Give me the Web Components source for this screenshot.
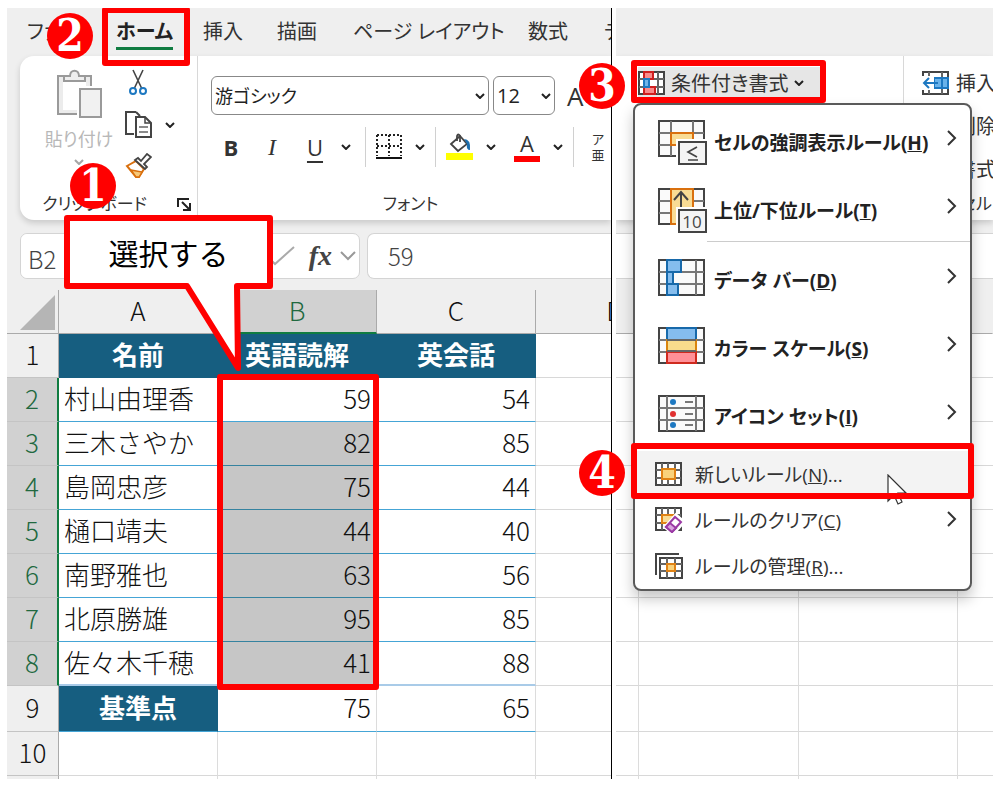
<!DOCTYPE html>
<html lang="ja">
<head>
<meta charset="UTF-8">
<title>条件付き書式</title>
<style>
    body {
        margin: 8px 15px 7px 7px;
        background: white;
        color: #333;
        font-family: "Open Sans", "Noto Sans CJK JP", sans-serif;
        overflow: hidden;
    }
</style>
</head>
<body>
<split-view>
    <excel-pane class="main">
        <ribbon-tabs>
            <ribbon-tab>ファイル</ribbon-tab>
            <ribbon-tab active>ホーム</ribbon-tab>
            <ribbon-tab>挿入</ribbon-tab>
            <ribbon-tab>描画</ribbon-tab>
            <ribbon-tab>ページ レイアウト</ribbon-tab>
            <ribbon-tab>数式</ribbon-tab>
            <ribbon-tab>データ</ribbon-tab>
        </ribbon-tabs>
        <ribbon-bar rounded>
            <clipboard-group></clipboard-group>
            <font-group></font-group>
        </ribbon-bar>
        <formula-bar cell="B2" value="59"></formula-bar>
        <score-sheet></score-sheet>
        <red-frame slot="overlay" style="left: 95px; top: -1px; width: 88px; height: 59px"></red-frame>
        <red-frame slot="overlay" style="left: 210px; top: 366px; width: 162px; height: 316px"></red-frame>
        <call-out slot="overlay" style="left: 57px; top: 207px">選択する</call-out>
        <step-badge slot="overlay" style="left: 40px; top: 5px">2</step-badge>
        <step-badge slot="overlay" style="left: 63px; top: 155px">1</step-badge>
    </excel-pane>
    <excel-pane class="side">
        <ribbon-tabs></ribbon-tabs>
        <ribbon-bar>
            <style-group></style-group>
            <cells-group></cells-group>
        </ribbon-bar>
        <formula-bar blank></formula-bar>
        <blank-sheet></blank-sheet>
        <rule-menu slot="overlay" style="left: 17px; top: 95px">
            <rule-item big icon="highlight" key="H" more>セルの強調表示ルール</rule-item>
            <rule-item big icon="topten" key="T" more divided>上位/下位ルール</rule-item>
            <rule-item big icon="databar" key="D" more>データ バー</rule-item>
            <rule-item big icon="scale" key="S" more>カラー スケール</rule-item>
            <rule-item big icon="iconset" key="I" more>アイコン セット</rule-item>
            <rule-item icon="newrule" key="N" tail="..." hover>新しいルール</rule-item>
            <rule-item icon="clear" key="C" more>ルールのクリア</rule-item>
            <rule-item icon="manage" key="R" tail="...">ルールの管理</rule-item>
        </rule-menu>
        <app-icon slot="overlay" name="pointer" style="left: 271px; top: 466px"></app-icon>
        <red-frame slot="overlay" style="left: 15px; top: 52px; width: 195px; height: 43px"></red-frame>
        <red-frame slot="overlay" style="left: 15px; top: 435px; width: 343px; height: 56px"></red-frame>
        <step-badge slot="overlay" style="left: -37px; top: 55px">3</step-badge>
        <step-badge slot="overlay" style="left: -37px; top: 442px">4</step-badge>
    </excel-pane>
</split-view>

<script>
const svg = (w, h, body) => `<svg width="${w}" height="${h}" viewBox="0 0 ${w} ${h}" fill="none" stroke="#444" stroke-width="2">${body}</svg>`;

// grids shared by the large and the small icons
const bigGrid = '<path d="M2 2H47V37H2Z" fill="#fafafa"/><path stroke="#777" d="M2 14H47M2 26H47M10 2V37M39 2V37"/>';
const wideGrid = '<path d="M2 2H47V37H2Z" fill="#fafafa"/><path stroke="#777" d="M2 14H47M2 26H47M14 2V37M36 2V37"/>';
const smallGrid = '<path d="M1 1H26V23H1Z" fill="#fff"/><path stroke="#666" d="M1 8H26M1 16H26M7 1V23M20 1V23"/>';
const cornerBox = '<path fill="#f4f4f4" stroke="#fff" stroke-width="6" d="M22 23H50V45H22Z"/><path fill="#f4f4f4" d="M22 23H49V45H22Z"/>';

const ICONS = {
    chevron: svg(10, 6, '<path stroke="#222" d="M1 1L5 5L9 1"/>'),
    paste: svg(46, 50, '<g stroke="#9a9a9a"><path fill="#ececec" d="M2 7H35V45H2Z"/><path fill="#fff" stroke="none" d="M7 12H30V41H7Z"/><path fill="#eee" d="M8 12V7H14C14 0 23 0 23 7H29V12Z"/><path fill="#f1f1f1" stroke="#fff" stroke-width="6" d="M24 20H45V49H24Z"/><path fill="#f1f1f1" d="M24 20H45V48H24Z"/></g>'),
    cut: svg(18, 27, '<path stroke-width="1.6" d="M4 1L13 20M14 1L5 20"/><g stroke="#1d78c1"><circle cx="4" cy="22" r="3"/><circle cx="14" cy="22" r="3"/></g>'),
    copy: svg(28, 27, '<path d="M11 1H1V23H9M11 1L15 5"/><path fill="#fff" d="M11 6H20L26 12V26H11Z"/><path d="M20 6V12H26" stroke-width="1.5"/><path stroke="#666" stroke-width="1.5" d="M14 16H23M14 21H23"/>'),
    painter: svg(27, 26, '<path fill="#fff" stroke="#d9700e" d="M2 13L11 8L19 16L14 24L11 24Z"/><path fill="#f7c979" stroke="#d9700e" stroke-width="1.4" d="M6 17L17 19L14 24H11Z"/><path fill="#fff" stroke-width="1.8" d="M10 7L13 5L16 8L22 1L26 4L19 11L22 14L20 16Z"/>'),
    launcher: svg(14, 13, '<path stroke="#222" d="M1 9V1H12M5 4L12 11M13 5V12H6"/>'),
    borders: svg(26, 26, '<g stroke="#222" stroke-dasharray="2 2"><path d="M1 1H25M1 1V22M25 1V22M13 1V22M1 12H25"/></g><path stroke="#111" d="M0 24H26"/>'),
    fill: svg(27, 28, '<path d="M0 20H27V27H0Z" fill="#ff0" stroke="none"/><path fill="#fff" stroke-width="1.8" d="M5 11L14 3L21 11L12 18Z"/><path stroke-width="1.8" d="M11 8V3Q12 0 14 3V9"/><path fill="#1d6fae" stroke="none" d="M18 6Q25 6 24 17Q20 17 21 11Z"/>'),
    check: svg(28, 20, '<path stroke="#aaa" d="M1 11L8 18L27 1"/>'),
    down: svg(16, 10, '<path stroke="#999" d="M1 1L8 8L15 1"/>'),
    right: svg(10, 18, '<path stroke="#333" d="M1 2L8 9L1 16"/>'),
    format: svg(27, 24, smallGrid + '<path fill="#f98b8b" stroke="#cf1f1f" d="M6 1H15V8H6ZM6 16H17V23H6Z"/><path fill="#6fb4ea" stroke="#1d78c1" d="M6 8H11V16H6Z"/>'),
    insert: svg(27, 24, smallGrid + '<path fill="#69b2ea" stroke="#1d78c1" d="M12 7H26V17H12Z"/><path d="M0 5H12V19H0Z" fill="#fff" stroke="none"/><path stroke="#1d78c1" d="M2 12H16M7 7L2 12L7 17M20 7V17"/>'),
    highlight: svg(50, 46, wideGrid + '<path fill="#fafafa" stroke="none" d="M15 3H35V13H15Z"/><path fill="#f9dc94" stroke="#d9700e" d="M14 14H36V26H14Z"/>' + cornerBox + '<path stroke-width="1.7" d="M40 28L31 33L40 38M31 41H41"/>'),
    topten: svg(50, 46, wideGrid + '<path fill="#f9dc94" stroke="#d9700e" d="M14 2H36V37H14Z"/><path d="M24 5V24M17 13L24 5L31 13"/>' + cornerBox + '<text x="35" y="41" text-anchor="middle" font-family="Open Sans, sans-serif" font-size="17" font-weight="400" fill="#444" stroke="none">10</text>'),
    databar: svg(50, 44, bigGrid + '<g fill="#85bdee" stroke="#1769aa"><path d="M10 2H24V14H10ZM10 14H16V26H10ZM10 26H21V37H10Z"/></g>'),
    scale: svg(50, 44, bigGrid + '<path fill="#85bdee" stroke="#1769aa" d="M10 2H39V14H10Z"/><path fill="#f9dc8c" stroke="#d9850e" d="M10 14H39V26H10Z"/><path fill="#ff9097" stroke="#cf2a1f" d="M10 26H39V37H10Z"/><path stroke="#666" d="M10 14H39M10 25H39"/>'),
    iconset: svg(50, 44, bigGrid + '<g stroke="none"><circle cx="16" cy="8" r="3" fill="#1d78c1"/><circle cx="16" cy="20" r="3" fill="#e03030"/><circle cx="16" cy="31" r="3" fill="#1d78c1"/></g><path stroke="#777" d="M28 8H36M28 20H36M28 31H36"/>'),
    newrule: svg(27, 24, smallGrid + '<path stroke="#666" d="M13 1V23"/><path fill="#f9d27b" stroke="#e08214" d="M7 7H20V17H7Z"/>'),
    clear: svg(28, 26, smallGrid + '<path stroke="#666" d="M13 1V23"/><path fill="#f9dc94" stroke="#e08214" d="M7 8H20V16H7Z"/><path fill="#fff" stroke="#fff" stroke-width="6" d="M12 20L21 10L27 15L18 25Z"/><path fill="#fff" stroke="#9b3aa5" d="M11 20L20 10L26 15L17 25Z"/><path fill="#d9a6df" stroke="#9b3aa5" d="M11 20L15 16L21 21L17 25Z"/>'),
    manage: svg(28, 27, '<path d="M1 22V1H24"/><path fill="#fff" d="M5 5H27V25H5Z"/><path stroke="#666" d="M5 11H27M5 18H27M12 5V25M20 5V25"/><path fill="#f9d27b" stroke="#e08214" d="M12 11H20V18H12Z"/>'),
    pointer: svg(22, 32, '<path fill="#fff" stroke="#333" stroke-width="1.2" d="M1 1V27L7 21L11 30L15 28L11 19H19Z"/>')
};

function define(name, render) {
    customElements.define(name, class extends HTMLElement {
        constructor() {
            super();
            this.attachShadow({ mode: 'open' });
        }

        connectedCallback() {
            this.shadowRoot.innerHTML = render(this);
        }
    });
}

define('app-icon', (el) => `
    <style>
        :host { display: block; flex: none; }
        :host([slot="overlay"]) { position: absolute; }
        svg { display: block; }
    </style>
    ${ICONS[el.getAttribute('name')]}
`);

define('split-view', () => `
    <style>
        :host {
            display: grid;
            grid-template-columns: 605fr 377fr;
            gap: 4px;
        }
    </style>
    <slot></slot>
`);

define('excel-pane', () => `
    <style>
        :host { display: block; position: relative; min-width: 0; }
        :host(.main) .content { border-right: 1px solid black; }
        .content {
            overflow: hidden;
            background: #efefef;
        }
    </style>
    <div class="content"><slot></slot></div>
    <slot name="overlay"></slot>
`);

define('ribbon-tabs', () => `
    <style>
        :host {
            display: grid;
            grid-template-columns: 89px 87px 74px 76px 175px 76px auto;
            height: 48px;
            padding-left: 20px;
            font-size: 20px;
            font-feature-settings: "palt";
        }
    </style>
    <slot></slot>
`);

define('ribbon-tab', () => `
    <style>
        :host { display: block; }
        button {
            height: 42px;
            padding: 8px 0 0;
            border: none;
            border-bottom: 3px solid transparent;
            background: none;
            color: inherit;
            font: inherit;
            font-feature-settings: inherit;
            line-height: 30px;
            text-align: left;
            white-space: nowrap;
        }
        :host(:first-child) button {
            max-width: 64px;
            overflow: hidden;
        }
        :host([active]) button {
            border-color: #107c41;
            color: #222;
            font-weight: bold;
        }
    </style>
    <button type="button"><slot></slot></button>
`);

define('ribbon-bar', () => `
    <style>
        :host {
            display: flex;
            height: 164px;
            margin-bottom: 13px;
            background: white;
            box-shadow: 0 3px 6px rgba(0, 0, 0, 0.16);
            font-size: 20px;
            font-feature-settings: "palt";
        }
        :host([rounded]) {
            margin-left: 13px;
            border-radius: 14px 0 0 14px;
        }
    </style>
    <slot></slot>
`);

const groupStyle = `
    :host {
        display: flex;
        flex-direction: column;
        flex: none;
        box-sizing: border-box;
        height: 164px;
        padding-bottom: 3px;
    }
    .row { display: flex; align-items: center; }
    .label { height: 26px; line-height: 26px; font-size: 17px; white-space: nowrap; }
    button {
        display: flex;
        align-items: center;
        padding: 0;
        border: none;
        background: none;
        color: inherit;
        font: inherit;
        font-feature-settings: inherit;
        white-space: nowrap;
    }
`;

define('clipboard-group', () => `
    <style>
        ${groupStyle}
        :host {
            width: 178px;
            border-right: 1px solid #d8d8d8;
        }
        .tools { flex: 1; align-items: flex-start; padding: 13px 0 0 24px; }
        .paste { flex-direction: column; width: 70px; color: #b8b8b8; font-size: 18px; line-height: 28px; gap: 6px; }
        .paste .more { opacity: 0.4; }
        .side { display: flex; flex-direction: column; gap: 15px; margin-left: 11px; }
        .side button { gap: 12px; }
        .side .cut { padding-left: 4px; }
        .label { padding-right: 6px; justify-content: flex-end; gap: 30px; }
    </style>
    <div class="row tools">
        <button class="paste" type="button"><app-icon name="paste"></app-icon>貼り付け<app-icon class="more" name="chevron"></app-icon></button>
        <div class="side">
            <button class="cut" type="button" aria-label="切り取り"><app-icon name="cut"></app-icon></button>
            <button type="button" aria-label="コピー"><app-icon name="copy"></app-icon><app-icon name="chevron"></app-icon></button>
            <button type="button" aria-label="書式のコピー"><app-icon name="painter"></app-icon></button>
        </div>
    </div>
    <div class="row label">クリップボード<app-icon name="launcher"></app-icon></div>
`);

define('font-group', () => `
    <style>
        ${groupStyle}
        :host { flex: 1; }
        .boxes { gap: 4px; padding: 20px 0 0 13px; }
        .box { display: flex; align-items: center; position: relative; }
        .box app-icon { position: absolute; right: 4px; pointer-events: none; }
        select {
            appearance: none;
            box-sizing: border-box;
            height: 39px;
            padding: 0 4px 0 3px;
            border: 1px solid #888;
            border-radius: 6px;
            background: white;
            color: #222;
            font: inherit;
            font-feature-settings: inherit;
        }
        .name { width: 278px; font-size: 18px; }
        .size { width: 62px; }
        .grow { margin-left: 8px; font-size: 26px; line-height: 32px; }
        .tools { height: 40px; padding: 12px 0 0 13px; font-size: 22px; }
        .tools button { justify-content: center; height: 40px; }
        .b { width: 40px; font-weight: bold; }
        .i { width: 42px; font-family: "Liberation Serif", serif; font-style: italic; font-size: 24px; }
        .u { width: 44px; text-decoration: underline; text-underline-offset: 5px; }
        .pair { gap: 13px; }
        .u + .pair { width: 18px; }
        .sep { width: 1px; height: 40px; margin: 0 10px; background: #d0d0d0; }
        .color { display: block; width: 26px; height: 24px; line-height: 22px; border-bottom: 6px solid red; }
        .color-pair { margin-left: 18px; }
        .ruby { flex-direction: column; width: 18px; margin-left: 5px; font-size: 13px; line-height: 16px; }
        .label { margin-top: auto; padding-left: 12px; text-align: center; }
    </style>
    <div class="row boxes">
        <span class="box"><select class="name" aria-label="フォント"><option>游ゴシック</option></select><app-icon name="chevron"></app-icon></span>
        <span class="box"><select class="size" aria-label="フォント サイズ"><option>12</option></select><app-icon name="chevron"></app-icon></span>
        <button class="grow" type="button">A</button>
    </div>
    <div class="row tools">
        <button class="b" type="button">B</button>
        <button class="i" type="button">I</button>
        <button class="u" type="button">U</button>
        <button class="pair" type="button" aria-label="下線"><app-icon name="chevron"></app-icon></button>
        <span class="sep"></span>
        <button class="pair" type="button" aria-label="罫線"><app-icon name="borders"></app-icon><app-icon name="chevron"></app-icon></button>
        <span class="sep"></span>
        <button class="pair" type="button" aria-label="塗りつぶしの色"><app-icon name="fill"></app-icon><app-icon name="chevron"></app-icon></button>
        <button class="pair color-pair" type="button"><span class="color">A</span><app-icon name="chevron"></app-icon></button>
        <span class="sep"></span>
        <button class="ruby" type="button"><span>ア</span><span>亜</span></button>
    </div>
    <div class="label">フォント</div>
`);

define('style-group', () => `
    <style>
        ${groupStyle}
        :host {
            width: 288px;
            padding: 11px 0 0 22px;
            border-right: 1px solid #d8d8d8;
        }
        button {
            width: 182px;
            height: 31px;
            gap: 6px;
            background: #e6e6e6;
        }
    </style>
    <button type="button"><app-icon name="format"></app-icon>条件付き書式<app-icon name="chevron"></app-icon></button>
`);

define('cells-group', () => `
    <style>
        ${groupStyle}
        :host { flex: 1; padding-top: 5px; }
        button { height: 43px; gap: 7px; padding-left: 18px; }
        .label { margin-top: auto; padding-left: 56px; }
    </style>
    <button type="button"><app-icon name="insert"></app-icon>挿入</button>
    <button type="button"><app-icon name="insert"></app-icon>削除</button>
    <button type="button"><app-icon name="newrule"></app-icon>書式</button>
    <div class="label">セル</div>
`);

define('formula-bar', (el) => `
    <style>
        :host {
            display: flex;
            gap: 7px;
            padding: 0 0 11px 13px;
            font-size: 24px;
        }
        :host([blank]) { padding-left: 0; }
        div, input {
            box-sizing: border-box;
            height: 46px;
            border: 1px solid #d4d4d4;
            background: white;
        }
        div {
            display: flex;
            align-items: center;
            flex: none;
            width: 340px;
            border-radius: 7px;
        }
        input {
            flex: 1;
            min-width: 0;
            padding: 0 0 2px 20px;
            border-right: none;
            border-radius: 7px 0 0 7px;
            color: #444;
            font: inherit;
            font-family: "Noto Sans CJK JP", sans-serif;
            font-weight: 300;
        }
        div input {
            flex: none;
            width: 60px;
            height: 44px;
            padding: 4px 0 0 7px;
            border: none;
            border-radius: 7px;
        }
        :host([blank]) input { border-radius: 0; border-left: none; }
        .check { margin-left: auto; }
        i { margin: 0 8px 0 14px; font: italic bold 28px "Liberation Serif", serif; color: #444; }
        .down { margin-right: 3px; }
    </style>
    ${el.hasAttribute('blank') ? '' : `<div>
        <input aria-label="名前ボックス" value="${el.getAttribute('cell')}">
        <app-icon class="check" name="check"></app-icon>
        <i>fx</i>
        <app-icon class="down" name="down"></app-icon>
    </div>`}
    <input aria-label="数式" value="${el.getAttribute('value') || ''}">
`);

const sheetStyle = `
    :host {
        display: block;
        background: white;
        font-family: "Noto Sans CJK JP", sans-serif;
        font-size: 26px;
        font-weight: 300;
        line-height: 36px;
        color: #111;
    }
    table {
        width: 100%;
        table-layout: fixed;
        border-collapse: separate;
        border-spacing: 0;
    }
    th, td {
        box-sizing: border-box;
        height: 44px;
        padding: 0 5px 3px;
        border-right: 1px solid #dcdcdc;
        border-bottom: 1px solid #d8d8d8;
        white-space: nowrap;
        overflow: hidden;
    }
    thead th {
        border-color: #aaa;
        background: #efefef;
        font-weight: 300;
    }
    .tall > * { height: 46px; }
    .stub > * { height: 3px; padding: 0; border-bottom: none; }
`;

const SCORES = [
    ['村山由理香', 59, 54],
    ['三木さやか', 82, 85],
    ['島岡忠彦', 75, 44],
    ['樋口靖夫', 44, 40],
    ['南野雅也', 63, 56],
    ['北原勝雄', 95, 85],
    ['佐々木千穂', 41, 88]
];

define('score-sheet', () => `
    <style>
        ${sheetStyle}
        table { min-width: 688px; }
        tbody th {
            border-right: 1px solid #aaa;
            border-bottom-color: #c4c4c4;
            background: #efefef;
            font-weight: 300;
        }
        th.on { background: #d1d1d1; color: #21693f; }
        thead th.on { border-bottom: 2px solid #107c41; }
        tbody th.on { border-right: 2px solid #107c41; }
        .corner { padding: 0 4px 3px 13px; vertical-align: bottom; }
        .corner svg { display: block; margin-left: auto; }
        .head { background: #165e80; color: white; font-weight: bold; text-align: center; border-color: #165e80; }
        .head.wide { padding-left: 27px; text-align: left; }
        td.num { text-align: right; }
        .score td:not(:last-child) { border-bottom-color: #45a5d6; }
        .score td.num.picked { background: #c6c6c6; border-bottom-color: #35829f; }
        .score td.plain { border-right-color: transparent; }
        .last td:not(:last-child) { border-bottom: 2px solid #a9cbe8; }
    </style>
    <table>
        <colgroup><col style="width: 52px"><col style="width: 159px"><col style="width: 159px"><col style="width: 159px"><col></colgroup>
        <thead>
            <tr>
                <th class="corner"><svg width="35" height="35"><path fill="#b5b5b5" d="M35 0V35H0Z"/></svg></th>
                <th>A</th><th class="on">B</th><th>C</th><th>D</th>
            </tr>
        </thead>
        <tbody>
            <tr><th>1</th><td class="head">名前</td><td class="head wide">英語読解</td><td class="head">英会話</td><td></td></tr>
            ${SCORES.map(([name, reading, speaking], i) => `
                <tr class="score ${i === SCORES.length - 1 ? 'last' : ''}">
                    <th class="on">${i + 2}</th>
                    <td class="plain">${name}</td>
                    <td class="num ${i > 0 ? 'picked' : ''}">${reading}</td>
                    <td class="num">${speaking}</td>
                    <td></td>
                </tr>`).join('')}
            <tr class="score tall"><th>9</th><td class="head">基準点</td><td class="num">75</td><td class="num">65</td><td></td></tr>
            <tr><th>10</th><td></td><td></td><td></td><td></td></tr>
            <tr class="stub"><th></th><td></td><td></td><td></td><td></td></tr>
        </tbody>
    </table>
`);

define('blank-sheet', () => {
    const cells = '<td></td>'.repeat(4);
    return `
        <style>
            ${sheetStyle}
            thead th { border-right-color: transparent; }
            td:last-child { border-right: none; }
        </style>
        <table>
            <colgroup><col style="width: 23px"><col style="width: 160px"><col style="width: 159px"><col></colgroup>
            <thead><tr>${'<th></th>'.repeat(4)}</tr></thead>
            <tbody>
                ${`<tr>${cells}</tr>`.repeat(8)}
                <tr class="tall">${cells}</tr>
                <tr>${cells}</tr>
                <tr class="stub">${cells}</tr>
            </tbody>
        </table>
    `;
});

define('rule-menu', () => `
    <style>
        :host {
            display: block;
            position: absolute;
            box-sizing: border-box;
            width: 339px;
            padding-top: 3px;
            border: 2px solid #5a5a5a;
            border-radius: 8px;
            background: white;
            box-shadow: 0 8px 14px rgba(0, 0, 0, 0.22);
        }
    </style>
    <slot></slot>
`);

define('rule-item', (el) => `
    <style>
        :host {
            display: block;
            font-size: 19px;
            font-feature-settings: "palt";
            color: #333;
        }
        button {
            display: flex;
            align-items: center;
            position: relative;
            width: 100%;
            height: 46px;
            padding: 0 13px 0 20px;
            border: none;
            background: none;
            color: inherit;
            font: inherit;
            font-feature-settings: inherit;
            white-space: nowrap;
        }
        .icon { width: 40px; }
        .more { margin-left: auto; padding-bottom: 2px; }
        :host([big]) { color: #222; font-weight: bold; }
        :host([big]) button { height: 68px; padding-left: 22px; }
        :host([big]) .icon { width: 57px; }
        :host([big]) .more { padding-bottom: 8px; }
        :host([divided]) { padding-bottom: 2px; }
        :host([divided]) button::after {
            content: "";
            position: absolute;
            left: 72px;
            right: 0;
            bottom: 2px;
            height: 1px;
            background: #ccc;
        }
        :host([hover]) { padding-top: 1px; }
        :host([hover]) button { background: #f3f3f3; }
    </style>
    <button type="button">
        <app-icon class="icon" name="${el.getAttribute('icon')}"></app-icon>
        <span><slot></slot>(<u>${el.getAttribute('key')}</u>)${el.getAttribute('tail') || ''}</span>
        ${el.hasAttribute('more') ? '<app-icon class="more" name="right"></app-icon>' : ''}
    </button>
`);

define('red-frame', () => `
    <style>
        :host {
            display: block;
            position: absolute;
            box-sizing: border-box;
            border: 6px solid red;
            border-radius: 3px;
            pointer-events: none;
        }
    </style>
`);

define('step-badge', () => `
    <style>
        :host {
            display: flex;
            align-items: center;
            justify-content: center;
            position: absolute;
            width: 46px;
            height: 46px;
            border-radius: 50%;
            background: red;
            color: white;
            font: bold 44px/46px "DejaVu Serif Condensed", "DejaVu Serif", serif;
        }
    </style>
    <slot></slot>
`);

define('call-out', () => `
    <style>
        :host {
            display: block;
            position: absolute;
            width: 209px;
            height: 160px;
        }
        svg { position: absolute; left: 0; top: 0; }
        p {
            position: relative;
            margin: 0;
            line-height: 74px;
            font-size: 30px;
            font-family: "Noto Sans CJK JP", sans-serif;
            color: black;
            text-align: center;
        }
    </style>
    <svg width="209" height="160"><path fill="white" stroke="red" stroke-width="6" stroke-linejoin="round" d="M3 3H206V71H173L174 153L123 71H3Z"/></svg>
    <p><slot></slot></p>
`);
</script>
</body>
</html>
